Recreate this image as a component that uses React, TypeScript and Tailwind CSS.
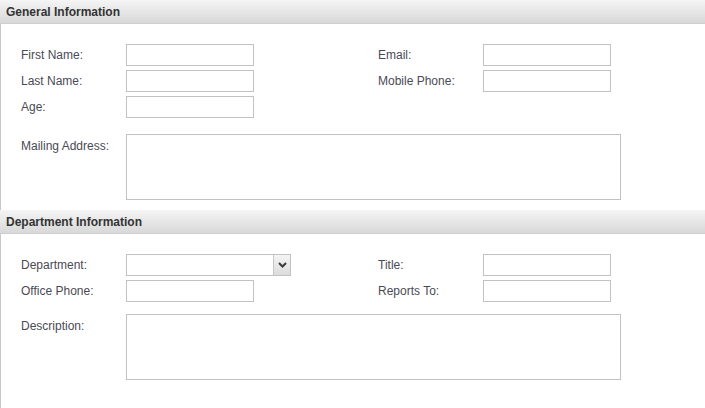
import React from "react";

function Header({ title }: { title: string }) {
  return (
    <div className="h-[24px] flex items-center pl-[6px] bg-gradient-to-b from-[#f5f5f5] to-[#d8d8d8] border-b border-[#cfcfcf] text-[12px] font-bold text-[#333333]">
      {title}
    </div>
  );
}

function Field({ label, wide }: { label: string; wide?: boolean }) {
  return (
    <div className="flex items-center h-[22px]">
      <div className="w-[105px] text-[12px] text-[#4a4a55]">{label}</div>
      <div className={`h-[22px] border border-[#c2c2c2] bg-white ${wide ? "w-[165px]" : "w-[128px]"}`} />
    </div>
  );
}

function SelectField({ label }: { label: string }) {
  return (
    <div className="flex items-center h-[22px]">
      <div className="w-[105px] text-[12px] text-[#4a4a55]">{label}</div>
      <div className="h-[22px] w-[165px] border border-[#c2c2c2] bg-white flex justify-end">
        <div className="w-[17px] h-full border-l border-[#c8c8c8] bg-gradient-to-b from-[#f4f4f4] to-[#dcdcdc] flex items-center justify-center">
          <svg width="9" height="6" viewBox="0 0 9 6">
            <path d="M1 1 L4.5 4.5 L8 1" fill="none" stroke="#3a3a3a" strokeWidth="2" />
          </svg>
        </div>
      </div>
    </div>
  );
}

function AreaField({ label }: { label: string }) {
  return (
    <div className="flex">
      <div className="w-[105px] pt-[3px] text-[12px] text-[#4a4a55]">{label}</div>
      <div className="h-[66px] w-[495px] border border-[#c2c2c2] bg-white" />
    </div>
  );
}

export default function App() {
  return (
    <div
      className="w-[705px] h-[408px] bg-white overflow-hidden"
      style={{ fontFamily: '"Liberation Sans", Arial, sans-serif' }}
    >
      <Header title="General Information" />
      <div className="border-l border-[#c8c8c8] pt-[20px] pl-[20px] h-[186px]">
        <div className="flex gap-[124px]">
          <div className="flex flex-col gap-[4px]">
            <Field label="First Name:" />
            <Field label="Last Name:" />
            <Field label="Age:" />
          </div>
          <div className="flex flex-col gap-[4px]">
            <Field label="Email:" />
            <Field label="Mobile Phone:" />
          </div>
        </div>
        <div className="mt-[16px]">
          <AreaField label="Mailing Address:" />
        </div>
      </div>
      <Header title="Department Information" />
      <div className="border-l border-[#c8c8c8] pt-[20px] pl-[20px] h-[174px]">
        <div className="flex">
          <div className="flex flex-col gap-[4px] w-[357px]">
            <SelectField label="Department:" />
            <Field label="Office Phone:" />
          </div>
          <div className="flex flex-col gap-[4px]">
            <Field label="Title:" />
            <Field label="Reports To:" />
          </div>
        </div>
        <div className="mt-[12px]">
          <AreaField label="Description:" />
        </div>
      </div>
    </div>
  );
}
